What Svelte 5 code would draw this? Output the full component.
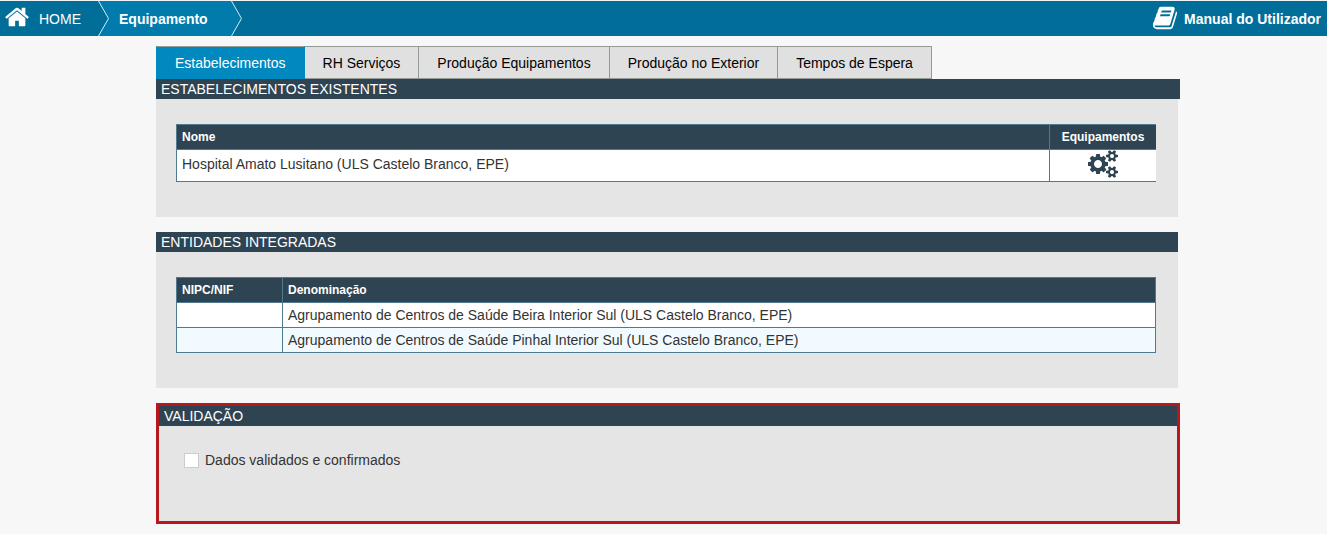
<script>
  const tabs = ['Estabelecimentos', 'RH Serviços', 'Produção Equipamentos', 'Produção no Exterior', 'Tempos de Espera'];
  let active = $state(0);
  let validated = $state(false);

  const establishments = ['Hospital Amato Lusitano (ULS Castelo Branco, EPE)'];
  const entities = [
    { nif: '', name: 'Agrupamento de Centros de Saúde Beira Interior Sul (ULS Castelo Branco, EPE)' },
    { nif: '', name: 'Agrupamento de Centros de Saúde Pinhal Interior Sul (ULS Castelo Branco, EPE)' }
  ];
</script>

<header class="topbar">
  <nav class="crumbs">
    <a class="home" href="#home">
      <svg class="icon" viewBox="0 0 1792 1792" aria-hidden="true"><path d="M1472 992v480q0 26-19 45t-45 19h-384v-384h-256v384h-384q-26 0-45-19t-19-45v-480q0-1 .5-3t.5-3l575-474 575 474q1 2 1 6zm223-69l-62 74q-8 9-21 11h-3q-13 0-21-7l-692-577-692 577q-12 8-24 7-13-2-21-11l-62-74q-8-10-7-23.500t11-21.500l719-599q32-26 76-26t76 26l244 204v-195q0-14 9-23t23-9h192q14 0 23 9t9 23v408l219 182q10 8 11 21.500t-7 23.500z" /></svg>
      <span>HOME</span>
    </a>
    <svg class="chevron" viewBox="0 0 12 35" aria-hidden="true"><path class="fill" d="M0 0H12V35H0L10.500 17.500Z" /><path class="line" d="M0.500 0L10.500 17.500L0.500 35" /></svg>
    <a class="current" href="#equipamento">Equipamento</a>
    <svg class="chevron" viewBox="0 0 12 35" aria-hidden="true"><path class="fill" d="M0 0L10.500 17.500L0 35Z" /><path class="line" d="M0.500 0L10.500 17.500L0.500 35" /></svg>
  </nav>
  <a class="manual" href="#manual">
    <svg class="icon" viewBox="0 0 1792 1792" aria-hidden="true"><path d="M1703 478q40 57 18 129l-275 906q-19 64-76.500 107.500t-122.500 43.500h-923q-77 0-148.500-53.500t-99.500-131.500q-24-67-2-127 0-4 3-27t4-37q1-8-3-21.500t-3-19.500q2-11 8-21t16.500-23.500 16.500-23.500q23-38 45-91.500t30-91.500q3-10 .5-30t-.5-28q3-11 17-28t17-23q21-36 42-92t25-90q1-9-2.500-32t.5-28q4-13 22-30.500t22-22.500q19-26 42.500-84.500t27.500-96.500q1-8-3-25.500t-2-26.500q2-8 9-18t18-23 17-21q8-12 16.500-30.500t15-35 16-36 19.500-32 26.500-23.500 36-11.500 47.500 5.500l-1 3q38-9 51-9h761q74 0 114 56t18 130l-274 906q-36 119-71.500 153.500t-128.500 34.500h-869q-27 0-38 15-11 16-1 43 24 70 144 70h923q29 0 56-15.500t35-41.500l300-987q7-22 5-57 38 15 59 43zm-1064 2q-4 13 2 22.500t20 9.500h608q13 0 25.500-9.500t16.500-22.500l21-64q4-13-2-22.500t-20-9.500h-608q-13 0-25.500 9.500t-16.500 22.500zm-83 256q-4 13 2 22.500t20 9.500h608q13 0 25.500-9.500t16.500-22.500l21-64q4-13-2-22.500t-20-9.500h-608q-13 0-25.500 9.500t-16.500 22.500z" /></svg>
    <span>Manual do Utilizador</span>
  </a>
</header>

<main>
  <div class="tabs" role="tablist">
    {#each tabs as tab, i}
      <button type="button" role="tab" class:active={active === i} aria-selected={active === i} onclick={() => (active = i)}>{tab}</button>
    {/each}
  </div>

  <section>
    <h2 class="wide">ESTABELECIMENTOS EXISTENTES</h2>
    <div class="body">
      <table class="open">
        <thead>
          <tr><th>Nome</th><th class="action">Equipamentos</th></tr>
        </thead>
        <tbody>
          {#each establishments as name}
            <tr>
              <td>{name}</td>
              <td class="action">
                <button type="button" class="cogs" aria-label="Equipamentos">
                  <svg viewBox="0 0 1920 1792" aria-hidden="true"><path d="M896 896q0-106-75-181t-181-75-181 75-75 181 75 181 181 75 181-75 75-181zm768 512q0-52-38-90t-90-38-90 38-38 90q0 53 37.500 90.500t90.500 37.500 90.500-37.500 37.500-90.500zm0-1024q0-52-38-90t-90-38-90 38-38 90q0 53 37.500 90.500t90.500 37.500 90.500-37.500 37.500-90.500zm-384 421v185q0 10-7 19.500t-16 10.500l-155 24q-11 35-32 76 34 48 90 115 7 11 7 20 0 12-7 19-23 30-82.500 89.500t-78.500 59.500q-11 0-21-7l-115-90q-37 19-77 31-11 108-23 155-7 24-30 24h-186q-11 0-20-7.500t-10-17.500l-23-153q-34-10-75-31l-118 89q-7 7-20 7-11 0-21-8-144-133-144-160 0-9 7-19 10-14 41-53t47-61q-23-44-35-82l-152-24q-10-1-17-9.500t-7-19.500v-185q0-10 7-19.500t16-10.500l155-24q11-35 32-76-34-48-90-115-7-11-7-20 0-12 7-20 22-30 82-89t79-59q11 0 21 7l115 90q34-18 77-32 11-108 23-154 7-24 30-24h186q11 0 20 7.500t10 17.500l23 153q34 10 75 31l118-89q8-7 20-7 11 0 21 8 144 133 144 160 0 8-7 19-12 16-42 54t-45 60q23 48 34 82l152 23q10 2 17 10.500t7 19.500zm640 533v140q0 16-149 31-12 27-30 52 51 113 51 138 0 4-4 7-122 71-124 71-8 0-46-47t-52-68q-20 2-30 2t-30-2q-14 21-52 68t-46 47q-2 0-124-71-4-3-4-7 0-25 51-138-18-25-30-52-149-15-149-31v-140q0-16 149-31 13-29 30-52-51-113-51-138 0-4 4-7 4-2 35-20t59-34 30-16q8 0 46 46.500t52 67.500q20-2 30-2t30 2q51-71 92-112l6-2q4 0 124 70 4 3 4 7 0 25-51 138 17 23 30 52 149 15 149 31zm0-1024v140q0 16-149 31-12 27-30 52 51 113 51 138 0 4-4 7-122 71-124 71-8 0-46-47t-52-68q-20 2-30 2t-30-2q-14 21-52 68t-46 47q-2 0-124-71-4-3-4-7 0-25 51-138-18-25-30-52-149-15-149-31v-140q0-16 149-31 13-29 30-52-51-113-51-138 0-4 4-7 4-2 35-20t59-34 30-16q8 0 46 46.500t52 67.500q20-2 30-2t30 2q51-71 92-112l6-2q4 0 124 70 4 3 4 7 0 25-51 138 17 23 30 52 149 15 149 31z" /></svg>
                </button>
              </td>
            </tr>
          {/each}
        </tbody>
      </table>
    </div>
  </section>

  <section>
    <h2>ENTIDADES INTEGRADAS</h2>
    <div class="body">
      <table>
        <thead>
          <tr><th class="nif">NIPC/NIF</th><th>Denominação</th></tr>
        </thead>
        <tbody>
          {#each entities as entity}
            <tr><td>{entity.nif}</td><td>{entity.name}</td></tr>
          {/each}
        </tbody>
      </table>
    </div>
  </section>

  <section class="validation">
    <h2>VALIDAÇÃO</h2>
    <div class="body">
      <label><input type="checkbox" bind:checked={validated} />Dados validados e confirmados</label>
    </div>
  </section>
</main>

<style>
  :global(body) {
    background: #f7f7f7;
    font-family: 'Liberation Sans', Arial, sans-serif;
    font-size: 14px;
    line-height: 20px;
    color: #333;
  }

  .topbar {
    display: flex;
    justify-content: space-between;
    height: 35px;
    border-top: 1px solid #eef4f7;
    background: #006e99;
  }
  .topbar a {
    display: flex;
    align-items: center;
    color: #fff;
    text-decoration: none;
  }
  .crumbs {
    display: flex;
  }
  .icon {
    width: 26px;
    height: 26px;
    fill: #fff;
  }
  .crumbs .icon {
    margin-bottom: 3px;
  }
  .home {
    gap: 9px;
    padding: 0 17px 0 4px;
  }
  .current {
    padding: 0 23px 0 9px;
    background: #007bac;
    font-weight: bold;
  }
  .chevron {
    width: 12px;
    height: 35px;
  }
  .chevron .fill {
    fill: #007bac;
  }
  .chevron .line {
    fill: none;
    stroke: #d5ecf5;
    stroke-width: 1;
  }
  .manual {
    gap: 6px;
    padding-right: 6px;
    font-weight: bold;
  }
  .manual .icon {
    margin-bottom: 2px;
  }

  main {
    padding: 10px 147px 10px 156px;
  }
  .tabs {
    display: flex;
  }
  .tabs button {
    margin: 0;
    padding: 6px 18px 5px;
    border: 1px solid #949b94;
    border-left-width: 0;
    background: #e0e0e0;
    font: inherit;
    color: #000;
    cursor: pointer;
  }
  .tabs button:first-child {
    border-left-width: 1px;
  }
  .tabs button.active {
    border-color: #949b94 #0088bf #0088bf;
    background: #0088bf;
    color: #fff;
  }

  section {
    margin: 0 2px 15px 0;
    background: #e5e5e5;
  }
  h2 {
    margin: 0;
    padding: 0 5px;
    background: #2f4453;
    font-size: 14px;
    font-weight: normal;
    line-height: 20px;
    color: #fff;
  }
  h2.wide {
    margin-right: -2px;
  }
  .body {
    padding: 25px 22px 35px 20px;
  }
  table {
    width: 100%;
    border: 1px solid #4f7a92;
    border-collapse: collapse;
    background: #fff;
  }
  table.open {
    border-right-style: hidden;
  }
  th,
  td {
    height: 20px;
    padding: 2px 5px;
    border: 1px solid #4f7a92;
    text-align: left;
  }
  th {
    background: #2f4453;
    font-size: 12px;
    color: #fff;
  }
  tbody tr:nth-child(even) {
    background: #f0faff;
  }
  .open td {
    padding: 0 5px 3px;
  }
  .nif {
    width: 95px;
  }
  .action {
    width: 96px;
    text-align: center;
  }
  .cogs {
    display: block;
    margin: 0 auto;
    padding: 0;
    border: 0;
    background: none;
    cursor: pointer;
  }
  .cogs svg {
    display: block;
    width: 30px;
    height: 28px;
    fill: #2f4453;
  }

  .validation {
    margin: 0;
    border: 3px solid #b5191d;
  }
  .validation .body {
    padding: 24px 25px 48px;
  }
  label {
    display: inline-flex;
    align-items: center;
    gap: 6px;
  }
  input {
    appearance: none;
    width: 15px;
    height: 15px;
    margin: 0;
    border: 1px solid #ccc;
    background: #fff;
  }
  input:checked {
    background: #0088bf;
  }
</style>
